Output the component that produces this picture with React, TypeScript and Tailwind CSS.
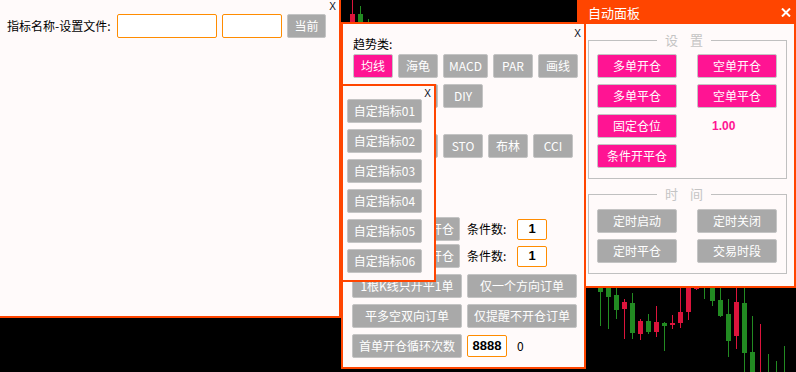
import React from "react";

const FONT = "'Noto Sans CJK SC', 'Noto Sans', sans-serif";

type Candle = [number, number, number, number, number, "g" | "r"];

const candles: Candle[] = [
  // top strip
  [350, 14, 30, 0, 30, "r"],
  [358, 14, 30, 6, 30, "g"],
  [366, 26, 30, 19, 30, "g"],
  // bottom right
  [598, 280, 292, 280, 326, "g"],
  [606, 280, 297, 280, 329, "g"],
  [614, 295, 310, 280, 319, "g"],
  [622, 302, 309, 299, 339, "r"],
  [630, 303, 333, 293, 339, "g"],
  [638, 321, 334, 319, 340, "r"],
  [646, 321, 332, 314, 334, "g"],
  [654, 322, 332, 306, 337, "r"],
  [662, 323, 326, 322, 351, "g"],
  [670, 323, 325, 315, 329, "r"],
  [678, 312, 323, 280, 328, "r"],
  [686, 280, 312, 280, 320, "r"],
  [694, 280, 289, 280, 290, "r"],
  [702, 270, 287, 280, 299, "g"],
  [710, 280, 301, 280, 306, "g"],
  [718, 300, 316, 280, 317, "g"],
  [726, 314, 341, 299, 357, "g"],
  [734, 302, 336, 280, 349, "r"],
  [742, 303, 353, 280, 380, "g"],
  [750, 352, 380, 316, 380, "g"],
  [758, 380, 390, 324, 380, "r"],
  [766, 380, 390, 354, 380, "g"],
  [774, 380, 390, 361, 380, "g"],
  [782, 380, 390, 346, 380, "g"],
];

function Chart() {
  return (
    <svg className="absolute left-0 top-0" width={796} height={372} viewBox="0 0 796 372">
      <rect x={0} y={0} width={796} height={372} fill="#000000" />
      {candles.map(([x, bt, bb, wt, wb, c], i) => {
        const col = c === "g" ? "#228b22" : "#dc143c";
        return (
          <g key={i}>
            <rect x={x + 2} y={wt} width={1} height={wb - wt} fill={col} />
            <rect x={x} y={bt} width={5} height={Math.max(bb - bt, 1)} fill={col} />
          </g>
        );
      })}
    </svg>
  );
}

function Btn({ w, pink, children }: { w: string; pink?: boolean; children?: React.ReactNode }) {
  return (
    <div
      className={`flex h-[24px] ${w} shrink-0 items-center justify-center rounded-[2px] border border-[#c4c4c4] ${
        pink ? "bg-[#ff1493]" : "bg-[#a9a9a9]"
      } text-[12px] leading-none text-white`}
    >
      {children}
    </div>
  );
}

function SmallX({ className }: { className: string }) {
  return (
    <span
      className={`absolute text-[10px] leading-[10px] text-[#0a0a20] ${className}`}
      style={{ fontFamily: "'Liberation Sans', Arial, sans-serif" }}
    >
      X
    </span>
  );
}

function NumBox({ w, h, children }: { w: string; h: string; children: React.ReactNode }) {
  return (
    <div
      className={`flex ${w} ${h} shrink-0 items-center justify-center rounded-[2px] border border-[#ff8c00] bg-white text-[13px] font-bold text-black`}
      style={{ fontFamily: "'Liberation Sans', Arial, sans-serif" }}
    >
      {children}
    </div>
  );
}

function LeftWindow() {
  return (
    <div className="absolute left-0 top-0 h-[318px] w-[341px] border-b-2 border-r-2 border-[#ff4500] bg-[#fffafa]">
      <SmallX className="right-[3px] top-[2px]" />
      <div className="ml-[7px] mt-[14px] flex h-[24px] items-center">
        <span className="w-[110px] text-[12px] text-black">指标名称-设置文件:</span>
        <div className="h-[24px] w-[100px] rounded-[2px] border border-[#ff8c00] bg-white" />
        <div className="ml-[5px] h-[24px] w-[60px] rounded-[2px] border border-[#ff8c00] bg-white" />
        <div className="ml-[5px]">
          <Btn w="w-[39px]">当前</Btn>
        </div>
      </div>
    </div>
  );
}

function MiddleWindow() {
  return (
    <div className="absolute left-[341px] top-[22px] h-[347px] w-[245px] border-2 border-[#ff4500] bg-[#fffafa]">
      <SmallX className="right-[3px] top-[5px]" />
      <div className="flex flex-col pl-[9px]">
        <div className="ml-[1px] mt-[12px] h-[16px] text-[12px] leading-[16px] text-black">趋势类:</div>
        <div className="ml-[1px] mt-[2px] flex gap-[5px]">
          <Btn w="w-[40px]" pink>
            均线
          </Btn>
          <Btn w="w-[40px]">海龟</Btn>
          <Btn w="w-[45px]">MACD</Btn>
          <Btn w="w-[40px]">PAR</Btn>
          <Btn w="w-[40px]">画线</Btn>
        </div>
        <div className="ml-[1px] mt-[6px] flex gap-[5px]">
          <Btn w="w-[40px]" />
          <Btn w="w-[40px]" />
          <Btn w="w-[40px]">DIY</Btn>
        </div>
        <div className="ml-[1px] mt-[26px] flex gap-[5px]">
          <Btn w="w-[40px]" />
          <Btn w="w-[40px]" />
          <Btn w="w-[40px]">STO</Btn>
          <Btn w="w-[40px]">布林</Btn>
          <Btn w="w-[40px]">CCI</Btn>
        </div>
        <div className="mt-[59px] flex h-[24px] items-center">
          <Btn w="w-[108px]">指标条件多单开仓</Btn>
          <span className="ml-[7px] w-[50px] text-[12px] text-black">条件数:</span>
          <NumBox w="w-[30px]" h="h-[21px]">1</NumBox>
        </div>
        <div className="mt-[3px] flex h-[24px] items-center">
          <Btn w="w-[108px]">指标条件空单开仓</Btn>
          <span className="ml-[7px] w-[50px] text-[12px] text-black">条件数:</span>
          <NumBox w="w-[30px]" h="h-[21px]">1</NumBox>
        </div>
        <div className="mt-[6px] flex gap-[5px]">
          <Btn w="w-[110px]">1根K线只开平1单</Btn>
          <Btn w="w-[110px]">仅一个方向订单</Btn>
        </div>
        <div className="mt-[6px] flex gap-[5px]">
          <Btn w="w-[110px]">平多空双向订单</Btn>
          <Btn w="w-[110px]">仅提醒不开仓订单</Btn>
        </div>
        <div className="mt-[6px] flex h-[24px] items-center">
          <Btn w="w-[110px]">首单开仓循环次数</Btn>
          <div className="ml-[5px]">
            <NumBox w="w-[40px]" h="h-[22px]">8888</NumBox>
          </div>
          <span className="ml-[10px] text-[12px] text-black">0</span>
        </div>
      </div>
    </div>
  );
}

function SubWindow() {
  const items = ["自定指标01", "自定指标02", "自定指标03", "自定指标04", "自定指标05", "自定指标06"];
  return (
    <div className="absolute left-[341px] top-[84px] h-[198px] w-[95px] border-2 border-[#ff4500] bg-[#fffafa]">
      <SmallX className="right-[3px] top-[3px]" />
      <div className="ml-[4px] mt-[13px] flex flex-col gap-[6px]">
        {items.map((t) => (
          <Btn key={t} w="w-[75px]">
            {t}
          </Btn>
        ))}
      </div>
    </div>
  );
}

function Fieldset({
  legend,
  h,
  pt,
  children,
}: {
  legend: [string, string];
  h: string;
  pt: string;
  children: React.ReactNode;
}) {
  return (
    <div className={`relative ml-[9px] ${h} w-[199px] border border-[#c0c0c0] ${pt} pl-[8px]`}>
      <div className="absolute left-[68px] top-[-9px] flex gap-[12px] bg-[#fffafa] px-[8px] text-[13px] leading-[16px] text-[#c4c4c4]">
        <span>{legend[0]}</span>
        <span>{legend[1]}</span>
      </div>
      {children}
    </div>
  );
}

function AutoPanel() {
  return (
    <div className="absolute left-[577px] top-0 flex h-[288px] w-[219px] flex-col border-x-2 border-b-2 border-[#ff4500] bg-[#fffafa]">
      <div className="-mx-[2px] flex h-[24px] shrink-0 items-center justify-between bg-[#ff4500] pl-[11px] pr-[5px]">
        <span className="text-[13px] leading-none text-white">自动面板</span>
        <svg width="10" height="9" viewBox="0 0 10 9">
          <path d="M1 0.5 L9 8.5 M9 0.5 L1 8.5" stroke="#ffffff" strokeWidth="2" />
        </svg>
      </div>
      <div className="mt-[16px]">
        <Fieldset legend={["设", "置"]} h="h-[139px]" pt="pt-[13px]">
          <div className="grid grid-cols-[80px_80px] gap-x-[20px] gap-y-[6px]">
            <Btn w="w-[80px]" pink>
              多单开仓
            </Btn>
            <Btn w="w-[80px]" pink>
              空单开仓
            </Btn>
            <Btn w="w-[80px]" pink>
              多单平仓
            </Btn>
            <Btn w="w-[80px]" pink>
              空单平仓
            </Btn>
            <Btn w="w-[80px]" pink>
              固定仓位
            </Btn>
            <div
              className="flex h-[24px] items-center pl-[15px] text-[12px] font-bold text-[#ff1493]"
              style={{ fontFamily: "'Liberation Sans', Arial, sans-serif" }}
            >
              1.00
            </div>
            <Btn w="w-[80px]" pink>
              条件开平仓
            </Btn>
          </div>
        </Fieldset>
      </div>
      <div className="mt-[15px]">
        <Fieldset legend={["时", "间"]} h="h-[80px]" pt="pt-[14px]">
          <div className="grid grid-cols-[80px_80px] gap-x-[20px] gap-y-[6px]">
            <Btn w="w-[80px]">定时启动</Btn>
            <Btn w="w-[80px]">定时关闭</Btn>
            <Btn w="w-[80px]">定时平仓</Btn>
            <Btn w="w-[80px]">交易时段</Btn>
          </div>
        </Fieldset>
      </div>
    </div>
  );
}

export default function App() {
  return (
    <div className="relative h-[372px] w-[796px] overflow-hidden bg-black" style={{ fontFamily: FONT }}>
      <Chart />
      <LeftWindow />
      <AutoPanel />
      <MiddleWindow />
      <SubWindow />
    </div>
  );
}
